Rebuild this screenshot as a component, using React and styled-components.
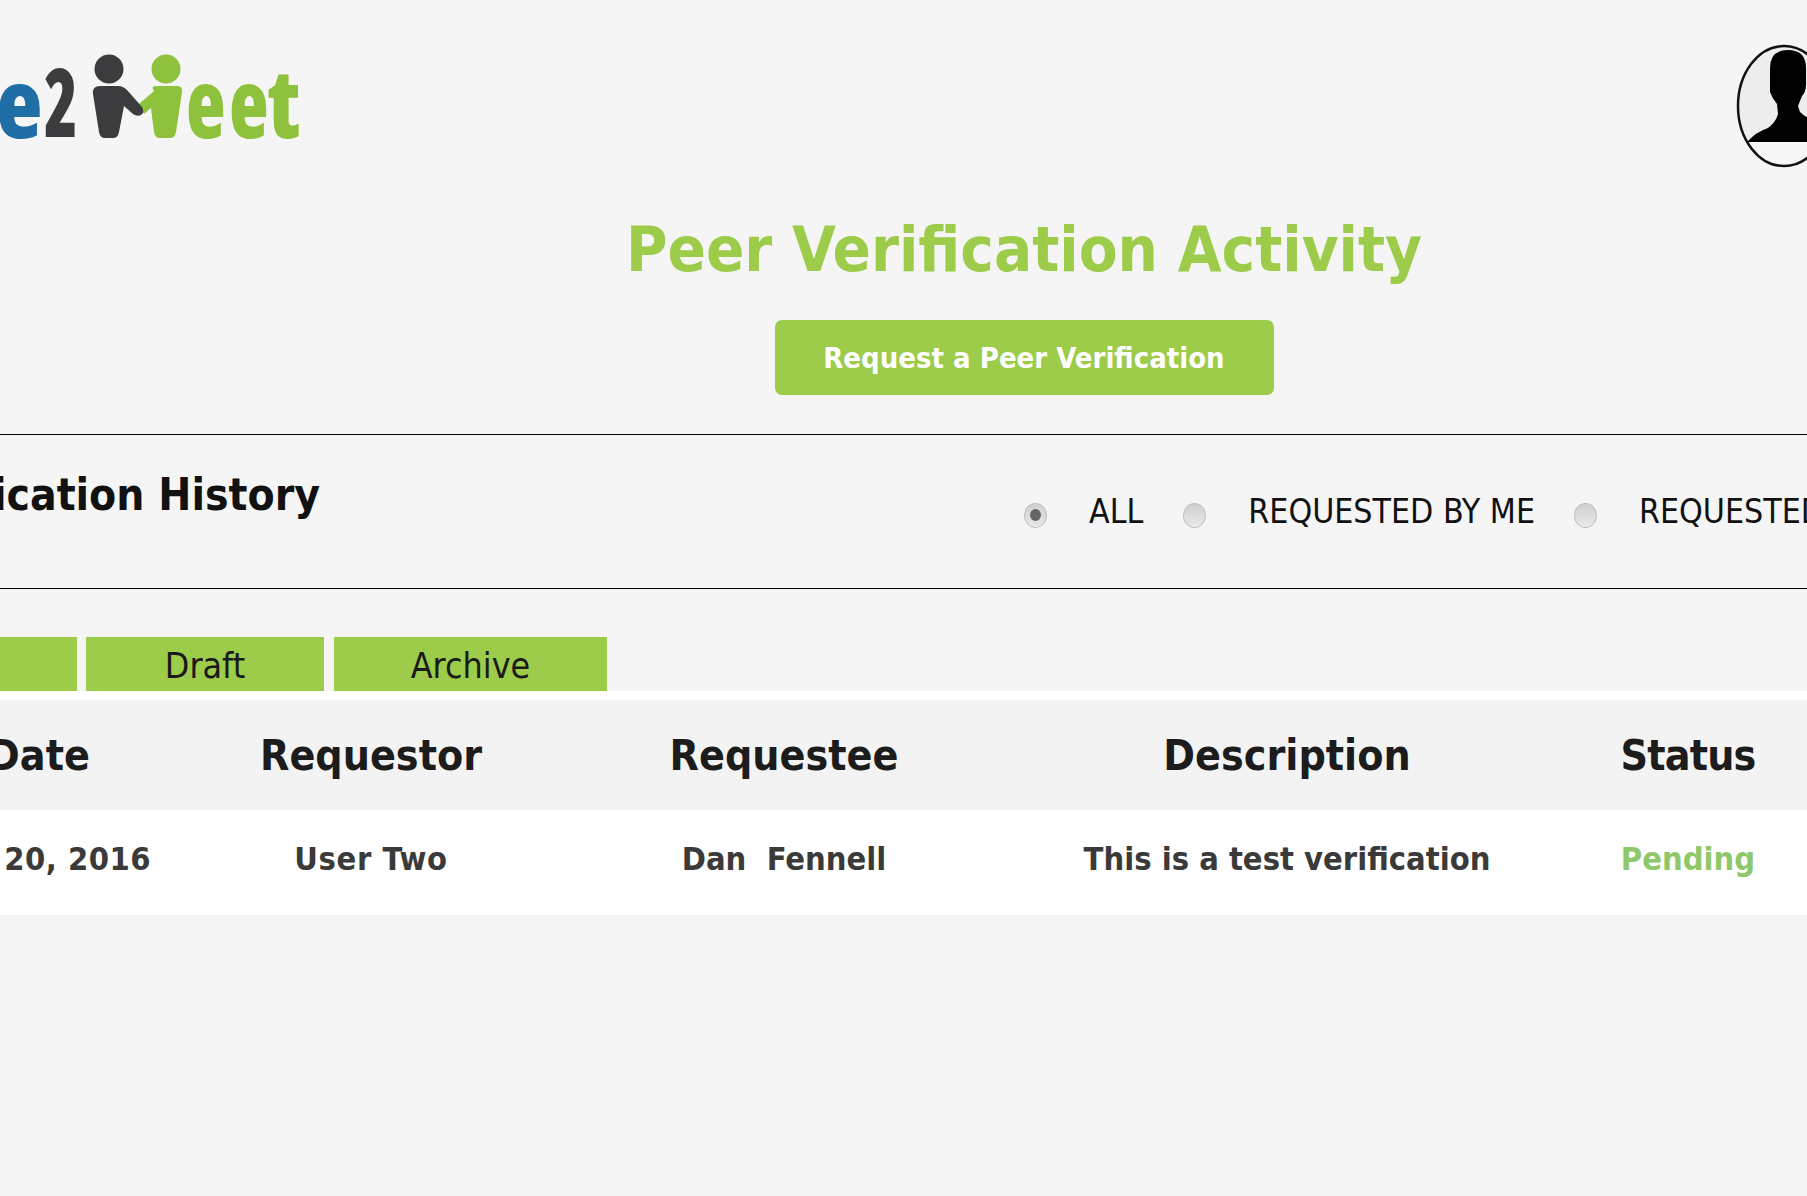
import React from "react";
import styled, { createGlobalStyle } from "styled-components";

const Global = createGlobalStyle`
  html, body { margin: 0; padding: 0; background: #f5f5f5; overflow: hidden; }
  #root { width: 1807px; height: 1196px; overflow: hidden; }
`;

const FONT = `"DejaVu Sans Condensed", "DejaVu Sans", sans-serif`;

const Viewport = styled.div`
  width: 1807px;
  height: 1196px;
  overflow: hidden;
  background: #f5f5f5;
  font-family: ${FONT};
  font-stretch: condensed;
`;

const Page = styled.div`
  width: 2528px;
  margin-left: -240px;
  display: flex;
  flex-direction: column;
`;

const TopBar = styled.header`
  height: 209px;
  padding-left: 240px;
  box-sizing: border-box;
  display: flex;
  justify-content: space-between;
  align-items: flex-start;
`;

const Title = styled.h1`
  margin: 0;
  text-align: center;
  height: 82px;
  line-height: 82px;
  font-size: 63px;
  font-weight: 700;
  color: #9dcb4a;
`;

const RequestButton = styled.button`
  align-self: center;
  margin-top: 29px;
  width: 499px;
  height: 75px;
  border: 0;
  border-radius: 7px;
  background: #9dcb4a;
  color: #fff;
  font-family: ${FONT};
  font-stretch: condensed;
  font-size: 29px;
  font-weight: 700;
`;

const FilterBar = styled.section`
  margin-top: 39px;
  height: 155px;
  box-sizing: border-box;
  border-top: 1.5px solid #000;
  border-bottom: 1.5px solid #000;
  display: flex;
  align-items: flex-start;
`;

const SectionTitle = styled.h2`
  width: 1264px;
  box-sizing: border-box;
  margin: 31px 0 0;
  text-align: right;
  padding-right: 704px;
  font-size: 44px;
  line-height: 58px;
  font-weight: 700;
  color: #111;
  white-space: nowrap;
`;

const RadioGroup = styled.div`
  margin-top: 55px;
  display: flex;
  align-items: center;
  white-space: nowrap;
`;

const RadioDot = styled.span`
  width: 23px;
  height: 25px;
  border-radius: 50%;
  margin-top: 6px;
  margin-left: ${(p) => p.$gap}px;
  margin-right: 42px;
  box-sizing: border-box;
  border: 1px solid #bdbdbd;
  background: linear-gradient(#d0d0d0, #e8e8e8);
  display: flex;
  align-items: center;
  justify-content: center;
  &::after {
    content: "";
    display: ${(p) => (p.$on ? "block" : "none")};
    width: 11px;
    height: 12px;
    border-radius: 50%;
    background: #666;
  }
`;

const RadioLabel = styled.span`
  font-size: 33.6px;
  line-height: 44px;
  color: #111;
`;

const Tabs = styled.nav`
  margin-top: 48px;
  padding-left: 17px;
  display: flex;
`;

const Tab = styled.div`
  width: ${(p) => p.$w}px;
  height: 54px;
  margin-right: ${(p) => p.$gap}px;
  line-height: 58px;
  text-align: center;
  background: #9dcb4a;
  color: #1a1a1a;
  font-size: 35.5px;
`;

const Table = styled.div`
  background: #fff;
  padding-top: 9px;
`;

const Row = styled.div`
  height: ${(p) => p.$h}px;
  background: ${(p) => p.$bg};
  padding-left: 160px;
  box-sizing: border-box;
  display: grid;
  grid-template-columns: 238px 426px 400px 606px 196px;
  align-items: center;
  text-align: center;
  white-space: nowrap;
`;

const Head = styled.div`
  font-size: 42.5px;
  font-weight: 700;
  color: #1c1c1c;
  letter-spacing: ${(p) => p.$ls || 0}px;
`;

const Cell = styled.div`
  font-size: 32.4px;
  font-weight: 700;
  padding-bottom: 7px;
  padding-left: ${(p) => p.$shift || 0}px;
  letter-spacing: ${(p) => p.$ls || 0}px;
  color: ${(p) => p.$c || "#3a3a3a"};
`;

const LogoSvg = styled.svg`
  display: block;
  margin-top: 30px;
  flex: none;
`;

const AvatarSvg = styled.svg`
  display: block;
  margin-top: 44px;
  margin-right: 452px;
  flex: none;
`;

const LogoText = styled.text`
  font-family: "Open Sans", sans-serif;
  font-size: 96px;
  font-weight: 800;
  fill: ${(p) => p.$c};
`;

const Logo = () => (
  <LogoSvg width="320" height="120" viewBox="0 30 320 120">
    <LogoText transform="translate(-4 138)" $c="#1f6ea5">e</LogoText>
    <LogoText transform="translate(44 137) scale(.72 1)" $c="#3c3c3e">2</LogoText>
    <circle cx="109" cy="69" r="14.5" fill="#3c3c3e" />
    <circle cx="166" cy="69" r="14.5" fill="#8fc23c" />
    <path d="M154 91 Q150 86 157 86 L177 86 Q183 86 182 92 L176 132 Q175 138 170 138 L160 138 Q155 138 154 132 L151 108 L144 114 L139 104 Z" fill="#8fc23c" />
    <path d="M100 86 L118 86 Q123 86 127 90 L142 107 Q145 112 141 115 Q137 117 133 114 L124 106 L119 132 Q118 138 113 138 L105 138 Q100 138 99 132 L93 94 Q92 86 100 86 Z" fill="#3c3c3e" />
    <LogoText transform="translate(186 138) scale(.85 1)" $c="#8fc23c">e</LogoText>
    <LogoText transform="translate(229 138) scale(.85 1)" $c="#8fc23c">e</LogoText>
    <LogoText transform="translate(268 138) scale(.95 1)" $c="#8fc23c">t</LogoText>
  </LogoSvg>
);

const Avatar = () => (
  <AvatarSvg width="100" height="126" viewBox="0 0 100 126">
    <defs>
      <clipPath id="oval"><ellipse cx="48" cy="62" rx="46" ry="60" /></clipPath>
    </defs>
    <g clipPath="url(#oval)">
      <rect width="100" height="126" fill="#ededed" />
      <rect y="98" width="100" height="28" fill="#f7f7f7" />
      <path d="M34 24 Q34 6 52 6 Q70 6 70 24 L70 40 Q70 48 66 52 L62 62 L64 68 Q72 76 96 84 L96 98 L11 98 Q20 88 32 84 Q40 78 42 70 L41 60 Q36 54 34 48 Z" fill="#000" />
    </g>
    <ellipse cx="48" cy="62" rx="46" ry="60" fill="none" stroke="#111" strokeWidth="2.5" />
  </AvatarSvg>
);

export default function App() {
  return (
    <Viewport>
      <Global />
      <Page>
        <TopBar>
          <Logo />
          <Avatar />
        </TopBar>
        <Title>Peer Verification Activity</Title>
        <RequestButton>Request a Peer Verification</RequestButton>
        <FilterBar>
          <SectionTitle>Peer Verification History</SectionTitle>
          <RadioGroup>
            <RadioDot $on $gap={0} />
            <RadioLabel>ALL</RadioLabel>
            <RadioDot $gap={40} />
            <RadioLabel>REQUESTED BY ME</RadioLabel>
            <RadioDot $gap={39} />
            <RadioLabel>REQUESTED TO ME</RadioLabel>
          </RadioGroup>
        </FilterBar>
        <Tabs>
          <Tab $w={300} $gap={9}>Sent</Tab>
          <Tab $w={238} $gap={10}>Draft</Tab>
          <Tab $w={273} $gap={0}>Archive</Tab>
        </Tabs>
        <Table>
          <Row $h={110} $bg="#f3f3f3">
            <Head>Date</Head>
            <Head>Requestor</Head>
            <Head>Requestee</Head>
            <Head>Description</Head>
            <Head $ls={-0.8}>Status</Head>
          </Row>
          <Row $h={105} $bg="#fff">
            <Cell $shift={14} $ls={0.5}>Jan 20, 2016</Cell>
            <Cell $ls={0.6}>User Two</Cell>
            <Cell>Dan&nbsp; Fennell</Cell>
            <Cell>This is a test verification</Cell>
            <Cell $c="#8fc86a">Pending</Cell>
          </Row>
        </Table>
      </Page>
    </Viewport>
  );
}
